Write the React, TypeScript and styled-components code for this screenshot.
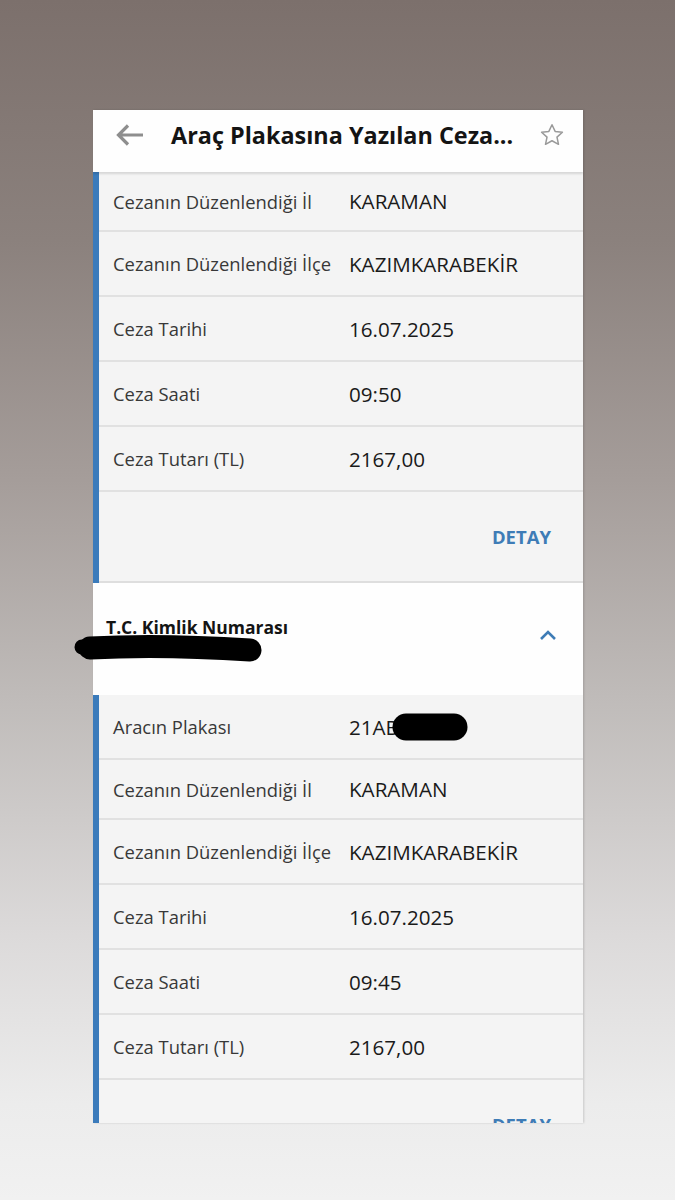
import styled, { createGlobalStyle } from 'styled-components';

const BLUE = '#3b7bbb';
const FONT = '"Open Sans", Roboto, "Noto Sans", sans-serif';

type Row = { label: string; value: string; short?: boolean };

const firstRows: Row[] = [
  { label: 'Cezanın Düzenlendiği İl', value: 'KARAMAN', short: true },
  { label: 'Cezanın Düzenlendiği İlçe', value: 'KAZIMKARABEKİR' },
  { label: 'Ceza Tarihi', value: '16.07.2025' },
  { label: 'Ceza Saati', value: '09:50' },
  { label: 'Ceza Tutarı (TL)', value: '2167,00' },
];

const secondRows: Row[] = [
  { label: 'Aracın Plakası', value: '21AB' },
  { label: 'Cezanın Düzenlendiği İl', value: 'KARAMAN', short: true },
  { label: 'Cezanın Düzenlendiği İlçe', value: 'KAZIMKARABEKİR' },
  { label: 'Ceza Tarihi', value: '16.07.2025' },
  { label: 'Ceza Saati', value: '09:45' },
  { label: 'Ceza Tutarı (TL)', value: '2167,00' },
];

const GlobalStyle = createGlobalStyle`
  html, body {
    margin: 0;
    padding: 0;
  }
  body {
    font-family: ${FONT};
    background: linear-gradient(
      180deg,
      #7c706c 0%,
      #8b817d 20%,
      #a59d9a 40%,
      #bfbbb9 58%,
      #dcdada 78%,
      #ececec 92%,
      #f1f1f1 100%
    );
    min-height: 1200px;
  }
`;

const Page = styled.div`
  height: 1200px;
  padding-top: 110px;
  box-sizing: border-box;
`;

const Frame = styled.div`
  position: relative;
  margin-left: 93px;
  width: 490px;
`;

const Screen = styled.div`
  height: 1013px;
  overflow: hidden;
  background: #f4f4f4;
  box-shadow: 1px 0 2px rgba(0, 0, 0, 0.15);
`;

const Header = styled.header`
  height: 62px;
  display: flex;
  align-items: center;
  background: #fefefe;
  box-shadow: 0 2px 2px rgba(0, 0, 0, 0.12);
  position: relative;
  z-index: 1;
  padding: 0 18px 12px 22px;
  box-sizing: border-box;
`;

const Title = styled.h1`
  flex: 1;
  margin: 0 0 0 26px;
  font-size: 23.4px;
  font-weight: 700;
  color: #141414;
  white-space: nowrap;
`;

const Section = styled.section`
  border-left: 6px solid ${BLUE};
  background: #f4f4f4;
`;

const DataRow = styled.div<{ $short?: boolean }>`
  height: ${(p) => (p.$short ? 58 : 63)}px;
  display: flex;
  align-items: center;
  border-bottom: 2px solid #e1e1e1;
  padding-left: 14px;
`;

const Label = styled.span`
  width: 236px;
  font-size: 18.4px;
  color: #383838;
  white-space: nowrap;
`;

const Value = styled.span`
  font-size: 20.6px;
  color: #1a1a1a;
`;

const ActionBar = styled.div`
  height: 89px;
  display: flex;
  align-items: center;
  justify-content: flex-end;
  padding-right: 32px;
  border-bottom: 2px solid #dedede;
`;

const DetailButton = styled.button`
  border: none;
  background: none;
  padding: 0;
  font-family: ${FONT};
  font-size: 18.5px;
  font-weight: 700;
  color: #3e7cb6;
`;

const GroupHeader = styled.div`
  height: 112px;
  background: #fefefe;
  display: flex;
  align-items: flex-start;
  justify-content: space-between;
  padding: 32px 26px 0 13px;
  box-sizing: border-box;
`;

const GroupTitle = styled.span`
  font-size: 17.5px;
  font-weight: 700;
  color: #141414;
`;

const Chevron = styled.span`
  margin-top: 14px;
  display: flex;
`;

const Scribble = styled.svg`
  position: absolute;
  left: -93px;
  top: -110px;
  pointer-events: none;
`;

const Rows = ({ rows }: { rows: Row[] }) => (
  <>
    {rows.map((r, i) => (
      <DataRow key={i} $short={r.short}>
        <Label>{r.label}</Label>
        <Value>{r.value}</Value>
      </DataRow>
    ))}
  </>
);

export default function App() {
  return (
    <>
      <GlobalStyle />
      <Page>
        <Frame>
          <Screen>
            <Header>
              <svg width="30" height="24" viewBox="0 0 30 24">
                <path d="M28 12H4M13 2.5L3.5 12 13 21.5" fill="none" stroke="#8e8e8e" strokeWidth="3.2" />
              </svg>
              <Title>Araç Plakasına Yazılan Ceza...</Title>
              <svg width="26" height="26" viewBox="0 0 24 24">
                <path
                  d="M12 2.5l2.9 6.2 6.7.7-5 4.6 1.4 6.6L12 17.3l-6 3.3 1.4-6.6-5-4.6 6.7-.7z"
                  fill="none"
                  stroke="#9a9a9a"
                  strokeWidth="1.4"
                  strokeLinejoin="round"
                />
              </svg>
            </Header>
            <Section>
              <Rows rows={firstRows} />
              <ActionBar>
                <DetailButton>DETAY</DetailButton>
              </ActionBar>
            </Section>
            <GroupHeader>
              <GroupTitle>T.C. Kimlik Numarası</GroupTitle>
              <Chevron>
                <svg width="18" height="12" viewBox="0 0 18 12">
                  <path d="M2 10L9 3l7 7" fill="none" stroke="#3e7cb6" strokeWidth="2.6" />
                </svg>
              </Chevron>
            </GroupHeader>
            <Section>
              <Rows rows={secondRows} />
              <ActionBar>
                <DetailButton>DETAY</DetailButton>
              </ActionBar>
            </Section>
          </Screen>
          <Scribble width="675" height="1200" viewBox="0 0 675 1200">
            <path d="M90 648 Q 160 644 250 650" fill="none" stroke="#000" strokeWidth="23" strokeLinecap="round" />
            <path d="M82 647 L 140 646" fill="none" stroke="#000" strokeWidth="15" strokeLinecap="round" />
            <path d="M406 727 L 454 727" fill="none" stroke="#000" strokeWidth="27" strokeLinecap="round" />
          </Scribble>
        </Frame>
      </Page>
    </>
  );
}
